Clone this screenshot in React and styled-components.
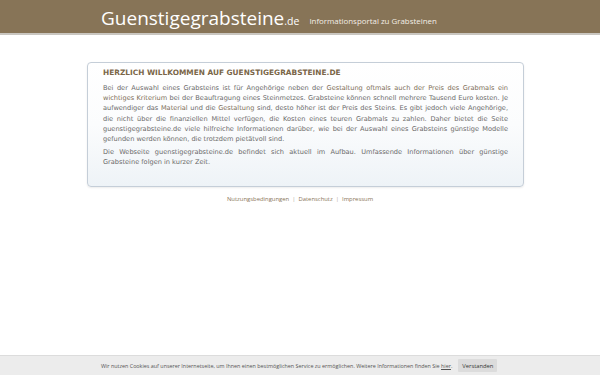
import React from "react";
import styled, { createGlobalStyle } from "styled-components";

const Global = createGlobalStyle`
  html, body { margin: 0; padding: 0; background: #fff; }
  body { font-family: "DejaVu Sans", sans-serif; width: 600px; height: 375px; overflow: hidden; position: relative; }
`;

const Header = styled.header`
  height: 33px;
  background: #877457;
  border-bottom: 2px solid #c9c6c0;
  display: flex;
  align-items: flex-end;
  padding-left: 101px;
  box-sizing: content-box;
`;

const Logo = styled.div`
  font-family: "Open Sans", sans-serif;
  color: #fff;
  font-size: 19px;
  line-height: 1;
  padding-bottom: 5px;
`;

const LogoTld = styled.span`
  font-size: 10.5px;
`;

const Tagline = styled.span`
  font-family: "Open Sans", sans-serif;
  color: #f3eee6;
  font-size: 7.9px;
  margin-left: 10px;
  padding-bottom: 7px;
`;

const Main = styled.main`
  display: flex;
  flex-direction: column;
  align-items: center;
  padding-top: 27px;
  padding-left: 11px;
`;

const Box = styled.section`
  width: 405px;
  padding: 4px 15px 15px 15px;
  border: 1px solid #c5ced8;
  border-radius: 4px;
  background: linear-gradient(#ffffff 0%, #fbfcfd 50%, #eef3f7 100%);
  box-shadow: 0 1px 2px rgba(0,0,0,0.08);
`;

const Title = styled.h1`
  margin: 0 0 5px 0;
  font-size: 7.4px;
  line-height: 11px;
  font-weight: bold;
  color: #7a6648;
`;

const Para = styled.p`
  margin: 0 0 3px 0;
  font-size: 6.6px;
  line-height: 10.2px;
  color: #6b6a6a;
  text-align: justify;
`;

const Hl = styled.span`
  color: #7d6e58;
`;

const FooterLinks = styled.nav`
  margin-top: 7px;
  font-family: "Open Sans", sans-serif;
  font-size: 5.9px;
  line-height: 10px;
  color: #b0a89c;
  display: flex;
  gap: 3px;
  margin-right: 11px;
`;

const FLink = styled.a`
  color: #8a7559;
  text-decoration: none;
`;

const CookieBar = styled.div`
  position: absolute;
  left: 0;
  right: 0;
  bottom: 0;
  height: 19px;
  background: #ececec;
  border-top: 1px solid #dcdcdc;
  display: flex;
  align-items: center;
  padding-left: 101px;
  font-family: "Open Sans", sans-serif;
  font-size: 5.4px;
  color: #555;
`;

const CookieLink = styled.a`
  color: #555;
  text-decoration: underline;
`;

const CookieButton = styled.button`
  margin-left: 6px;
  border: none;
  background: #dcdcdc;
  color: #333;
  font-family: "Open Sans", sans-serif;
  font-size: 5.8px;
  height: 13px;
  padding: 0 4px;
  border-radius: 1px;
`;

export default function App() {
  return (
    <>
      <Global />
      <Header>
        <Logo>
          Guenstigegrabsteine<LogoTld>.de</LogoTld>
        </Logo>
        <Tagline>Informationsportal zu Grabsteinen</Tagline>
      </Header>
      <Main>
        <Box>
          <Title>HERZLICH WILLKOMMEN AUF GUENSTIGEGRABSTEINE.DE</Title>
          <Para>
            Bei der Auswahl eines Grabsteins ist für Angehörige neben der <Hl>Gestaltung oftmals auch der Preis des Grabmals ein
            wichtiges Kriterium</Hl> bei der Beauftragung eines Steinmetzes. Grabsteine können schnell mehrere Tausend Euro kosten. Je
            aufwendiger das <Hl>Material</Hl> und die <Hl>Gestaltung</Hl> sind, desto höher ist der Preis des Steins. Es gibt jedoch viele Angehörige,
            die nicht über die finanziellen Mittel verfügen, die Kosten eines teuren Grabmals zu zahlen. Daher bietet die Seite
            guenstigegrabsteine.de viele hilfreiche Informationen darüber, wie bei der Auswahl eines Grabsteins günstige Modelle
            gefunden werden können, die trotzdem pietätvoll sind.
          </Para>
          <Para>
            Die Webseite guenstigegrabsteine.de befindet sich aktuell im Aufbau. Umfassende Informationen über günstige
            Grabsteine folgen in kurzer Zeit.
          </Para>
        </Box>
        <FooterLinks>
          <FLink href="#">Nutzungsbedingungen</FLink>|
          <FLink href="#">Datenschutz</FLink>|
          <FLink href="#">Impressum</FLink>
        </FooterLinks>
      </Main>
      <CookieBar>
        Wir nutzen Cookies auf unserer Internetseite, um Ihnen einen bestmöglichen Service zu ermöglichen. Weitere Informationen finden Sie&nbsp;<CookieLink href="#">hier</CookieLink>.
        <CookieButton>Verstanden</CookieButton>
      </CookieBar>
    </>
  );
}
